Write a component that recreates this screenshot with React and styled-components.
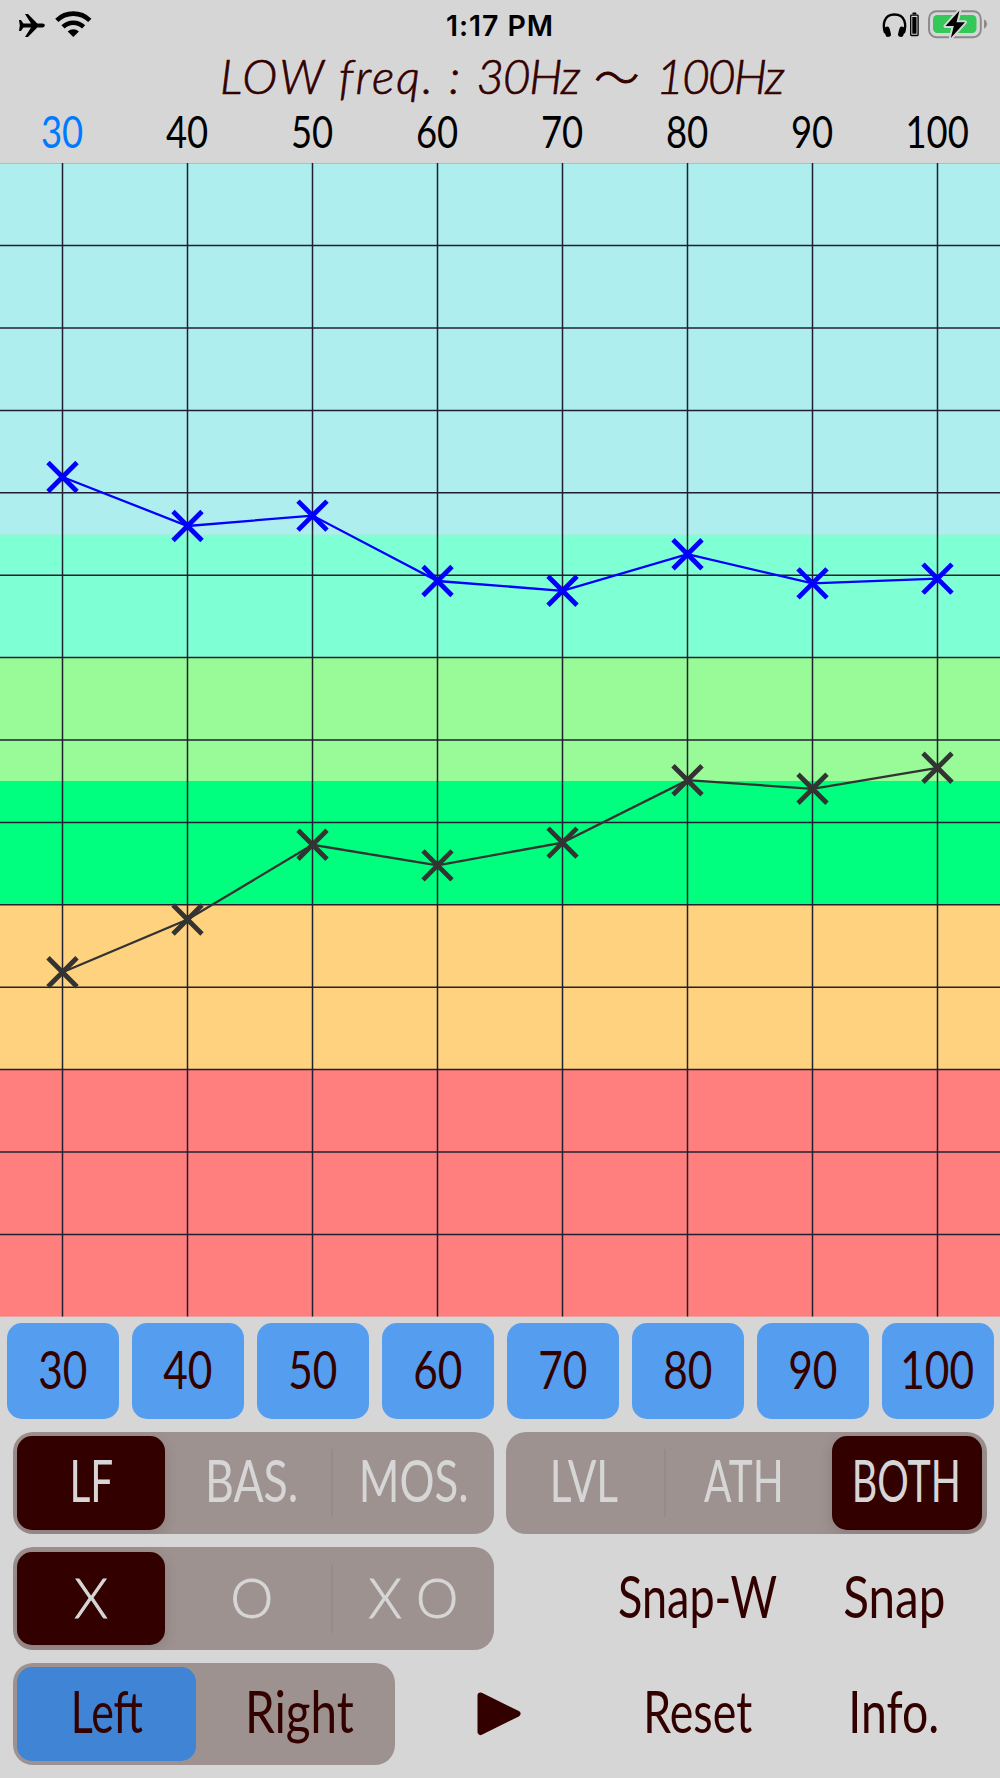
import React, { useState } from "react";
import styled, { createGlobalStyle } from "styled-components";

const FREQS = [30, 40, 50, 60, 70, 80, 90, 100];
const ROWS = 14;
const STEP = 82.4;
const HEIGHT = 1153.6;

const BANDS = [
  { from: 0, to: 4.51, color: "#afeeee" },
  { from: 4.51, to: 6, color: "#7fffd4" },
  { from: 6, to: 7.5, color: "#98fb98" },
  { from: 7.5, to: 9, color: "#00ff7f" },
  { from: 9, to: 11, color: "#ffd27f" },
  { from: 11, to: 14, color: "#ff7f7f" },
];

const LEVEL = [314, 363, 352.6, 418, 427.8, 391.2, 420.4, 415.6];
const THRESHOLD = [809.3, 756.5, 681.8, 702.4, 679.6, 617.2, 625.8, 604.8];

const xAt = (i) => 62.5 + i * 125;

function Series({ values, color }) {
  return (
    <g stroke={color} fill="none">
      <polyline
        strokeWidth="2.3"
        points={values.map((y, i) => `${xAt(i)},${y}`).join(" ")}
      />
      {values.map((y, i) => (
        <path
          key={i}
          strokeWidth="4.8"
          d={`M${xAt(i) - 14.5} ${y - 14.5}l29 29m0 -29l-29 29`}
        />
      ))}
    </g>
  );
}

function Chart() {
  return (
    <ChartSvg viewBox={`0 0 1000 ${HEIGHT}`}>
      {BANDS.map((b) => (
        <rect
          key={b.color}
          y={b.from * STEP}
          width="1000"
          height={(b.to - b.from) * STEP}
          fill={b.color}
        />
      ))}
      <g stroke="#202030" strokeWidth="1.5">
        <line x2="1000" y1="0.3" y2="0.3" stroke="#a9bfd2" />
        {Array.from({ length: ROWS - 1 }, (_, i) => (
          <line
            key={i}
            x2="1000"
            y1={(i + 1) * STEP + 0.2}
            y2={(i + 1) * STEP + 0.2}
          />
        ))}
        {FREQS.map((f, i) => (
          <line key={f} x1={xAt(i)} x2={xAt(i)} y2={HEIGHT} />
        ))}
      </g>
      <Series values={THRESHOLD} color="#333333" />
      <Series values={LEVEL} color="#0000ff" />
    </ChartSvg>
  );
}

function StatusIcons() {
  return (
    <svg width="110" height="50" viewBox="0 0 110 50">
      <path d="M19 20h2l2.4 3.6h7.6l-6-9.6h3l9.3 9.6h5c3.4 0 3.4 3.8 0 3.8h-5L28 37h-3l6-9.6h-7.6L21 31h-2l.8-5.5z" />
      <g fill="none" stroke="#000" strokeWidth="4.6">
        <path d="M56.8 20.4a23.6 23.6 0 0 1 33 0" />
        <path d="M63 26.9a14.8 14.8 0 0 1 20.6 0" />
      </g>
      <path d="M67.7 31.6a8 8 0 0 1 11.2 0l-5.6 5.5z" />
    </svg>
  );
}

function BatteryIcons() {
  return (
    <svg width="120" height="50" viewBox="880 0 120 50">
      <path
        d="M885.2 33c-3-8-1.5-18.5 9.3-18.5s12.3 10.5 9.3 18.5"
        fill="none"
        stroke="#000"
        strokeWidth="2.4"
      />
      <rect x="884.8" y="26.5" width="5.6" height="10.5" rx="2.8" transform="rotate(-14 887.6 32)" />
      <rect x="898.6" y="26.5" width="5.6" height="10.5" rx="2.8" transform="rotate(14 901.4 32)" />
      <rect x="912.4" y="12.6" width="4" height="2" rx="0.8" />
      <rect x="910.7" y="15.2" width="7.4" height="20.3" rx="0.8" fill="none" stroke="#000" strokeWidth="1.3" />
      <rect x="912.3" y="17" width="4.2" height="16.7" />
      <rect x="929" y="11.2" width="51.8" height="26" rx="7.5" fill="none" stroke="#8a8a8a" strokeWidth="1.9" />
      <path d="M984 19.5c4 1.8 4 7.4 0 9.2z" fill="#8a8a8a" />
      <rect x="933" y="15" width="43.5" height="18" rx="4.5" fill="#34c759" />
      <path
        d="M959.5 10.5L945.5 26h8.3l-3 12L965 22.2h-8.5z"
        stroke="#d6d6d6"
        strokeWidth="4"
        strokeLinejoin="round"
        paintOrder="stroke"
      />
    </svg>
  );
}

function Segments({ items, value, onChange, width, accent, thin }) {
  const index = items.findIndex((it) => it.label === value);
  return (
    <Control $width={width}>
      {items.map((it, i) => (
        <Segment
          key={it.label}
          $divider={i < items.length - 1 && i !== index && i + 1 !== index}
          onClick={() => onChange(it.label)}
        >
          <Thumb
            $on={i === index}
            $accent={accent}
            $thin={thin}
            $last={i === items.length - 1}
          >
            <Label $sx={it.sx} $light={!accent} $thin={thin} $size={thin ? 55 : 58}>
              {it.label}
            </Label>
          </Thumb>
        </Segment>
      ))}
    </Control>
  );
}

function App() {
  const [freq, setFreq] = useState(30);
  const [range, setRange] = useState("LF");
  const [view, setView] = useState("BOTH");
  const [mark, setMark] = useState("X");
  const [ear, setEar] = useState("Left");

  return (
    <Screen>
      <GlobalStyle />
      <StatusBar>
        <StatusIcons />
        <Time>1:17 PM</Time>
        <BatteryIcons />
      </StatusBar>
      <Title>
        <TitleText $spacing={2.1}>{"LOW freq. : "}</TitleText>
        <TitleText $spacing={-1.2}>30Hz</TitleText>
        <Wave>〜</Wave>
        <TitleText $spacing={-1.7}>100Hz</TitleText>
      </Title>
      <Axis>
        {FREQS.map((f) => (
          <Tick key={f} $active={f === freq}>
            <Label $size={45} $sx={0.81}>{f}</Label>
          </Tick>
        ))}
      </Axis>
      <Chart />
      <Freqs>
        {FREQS.map((f) => (
          <FreqButton key={f} onClick={() => setFreq(f)}>
            <Label $size={53} $sx={0.8}>{f}</Label>
          </FreqButton>
        ))}
      </Freqs>
      <Panel>
        <Row>
          <Segments
            width={480.5}
            value={range}
            onChange={setRange}
            items={[
              { label: "LF", sx: 0.7 },
              { label: "BAS.", sx: 0.77 },
              { label: "MOS.", sx: 0.755 },
            ]}
          />
          <Segments
            width={480.5}
            value={view}
            onChange={setView}
            items={[
              { label: "LVL", sx: 0.73 },
              { label: "ATH", sx: 0.7 },
              { label: "BOTH", sx: 0.68 },
            ]}
          />
        </Row>
        <Row>
          <Segments
            thin
            width={480.5}
            value={mark}
            onChange={setMark}
            items={[
              { label: "X", sx: 0.98 },
              { label: "O", sx: 0.98 },
              { label: "X O", sx: 0.97 },
            ]}
          />
          <Actions>
            <TextButton><Label $size={58} $sx={0.775}>Snap-W</Label></TextButton>
            <TextButton><Label $size={58} $sx={0.82}>Snap</Label></TextButton>
          </Actions>
        </Row>
        <Row>
          <Segments
            accent
            width={382}
            value={ear}
            onChange={setEar}
            items={[
              { label: "Left", sx: 0.74 },
              { label: "Right", sx: 0.82 },
            ]}
          />
          <Actions>
            <PlayButton>
              <svg width="46" height="46" viewBox="0 0 46 46">
                <path
                  d="M4.5 4.5L41.5 22.7L4.5 41z"
                  fill="#330000"
                  stroke="#330000"
                  strokeWidth="6"
                  strokeLinejoin="round"
                />
              </svg>
            </PlayButton>
            <TextButton><Label $size={58} $sx={0.77}>Reset</Label></TextButton>
            <TextButton><Label $size={58} $sx={0.8}>Info.</Label></TextButton>
          </Actions>
        </Row>
      </Panel>
    </Screen>
  );
}

const GlobalStyle = createGlobalStyle`
  * {
    box-sizing: border-box;
  }
  body {
    margin: 0;
    background: #d6d6d6;
  }
  button {
    padding: 0;
    border: none;
    background: none;
    color: inherit;
    font: inherit;
    cursor: pointer;
  }
`;
const Screen = styled.div`
  width: 1000px;
  height: 1778px;
  overflow: hidden;
  background: #d6d6d6;
  color: #330000;
  font-family: Lato, "Liberation Sans", sans-serif;
`;
const StatusBar = styled.div`
  height: 50px;
  display: grid;
  grid-template-columns: 1fr auto 1fr;
  color: #000;
  svg:last-child {
    justify-self: end;
  }
`;
const Time = styled.div`
  font: 600 28.5px/51px Inter, sans-serif;
  letter-spacing: 0.9px;
`;
const Title = styled.div`
  height: 51px;
  padding-left: 220px;
  display: flex;
  align-items: center;
  white-space: pre;
  line-height: 50px;
`;
const TitleText = styled.span`
  font-size: 47.5px;
  font-style: italic;
  font-weight: 300;
  letter-spacing: ${({ $spacing }) => $spacing}px;
  -webkit-text-stroke: 0.7px;
`;
const Wave = styled.span`
  margin: 0 17px 0 15px;
  font: 300 45px/50px "Noto Sans CJK JP", sans-serif;
  -webkit-text-stroke: 0.9px;
`;
const Axis = styled.div`
  height: 62px;
  display: grid;
  grid-template-columns: repeat(8, 125px);
`;
const Tick = styled.div`
  text-align: center;
  line-height: 61px;
  color: ${({ $active }) => ($active ? "#007aff" : "#000")};
`;
const Label = styled.span`
  display: inline-block;
  font-size: ${({ $size }) => $size}px;
  font-weight: ${({ $thin }) => ($thin ? 300 : 400)};
  color: ${({ $light }) => ($light ? "#d6d6d6" : "inherit")};
  white-space: nowrap;
  transform: scaleX(${({ $sx }) => $sx});
  -webkit-text-stroke: ${({ $thin }) => ($thin ? "0.9px" : "0")};
`;
const ChartSvg = styled.svg`
  display: block;
  width: 1000px;
  height: 1153.6px;
`;
const Freqs = styled.div`
  margin-top: 6.4px;
  padding: 0 6.5px;
  display: flex;
  gap: 13px;
`;
const FreqButton = styled.button`
  width: 112px;
  height: 96.5px;
  padding-bottom: 6px;
  border-radius: 15px;
  background: #559eef;
`;
const Panel = styled.div`
  padding: 12.5px 0 0 13px;
  display: flex;
  flex-direction: column;
  gap: 13px;
`;
const Row = styled.div`
  height: 102.5px;
  display: flex;
  gap: 12.5px;
`;
const Control = styled.div`
  width: ${({ $width }) => $width}px;
  display: flex;
  border-radius: 20px;
  background: #9e9290;
  overflow: hidden;
`;
const Segment = styled.button`
  flex: 1;
  min-width: 0;
  display: flex;
  align-items: stretch;
  background: ${({ $divider }) =>
    $divider
      ? "linear-gradient(#968a8c, #968a8c) 100% 50% / 2px 68px no-repeat"
      : "none"};
`;
const Thumb = styled.span`
  flex: 1;
  min-width: 0;
  display: flex;
  align-items: center;
  justify-content: center;
  margin: ${({ $last }) => ($last ? "4.5px 5px 4.5px 5.5px" : "4.5px 8px 4.5px 4.2px")};
  padding-bottom: ${({ $thin }) => ($thin ? 3 : 7)}px;
  border-radius: 15px;
  background: ${({ $on, $accent }) =>
    !$on ? "none" : $accent ? "#4084d6" : "#330000"};
  box-shadow: ${({ $on, $accent }) =>
    $on && !$accent ? "0 4px 14px rgba(0, 0, 0, 0.14)" : "none"};
`;
const Actions = styled.div`
  flex: 1;
  display: flex;
  justify-content: flex-end;
  padding-right: 8px;
`;
const TextButton = styled.button`
  width: 196px;
  display: flex;
  align-items: center;
  justify-content: center;
  padding-bottom: 7px;
`;
const PlayButton = styled.button`
  flex: 1;
  display: flex;
  align-items: center;
  justify-content: center;
  padding-right: 9px;
`;
export default App;
